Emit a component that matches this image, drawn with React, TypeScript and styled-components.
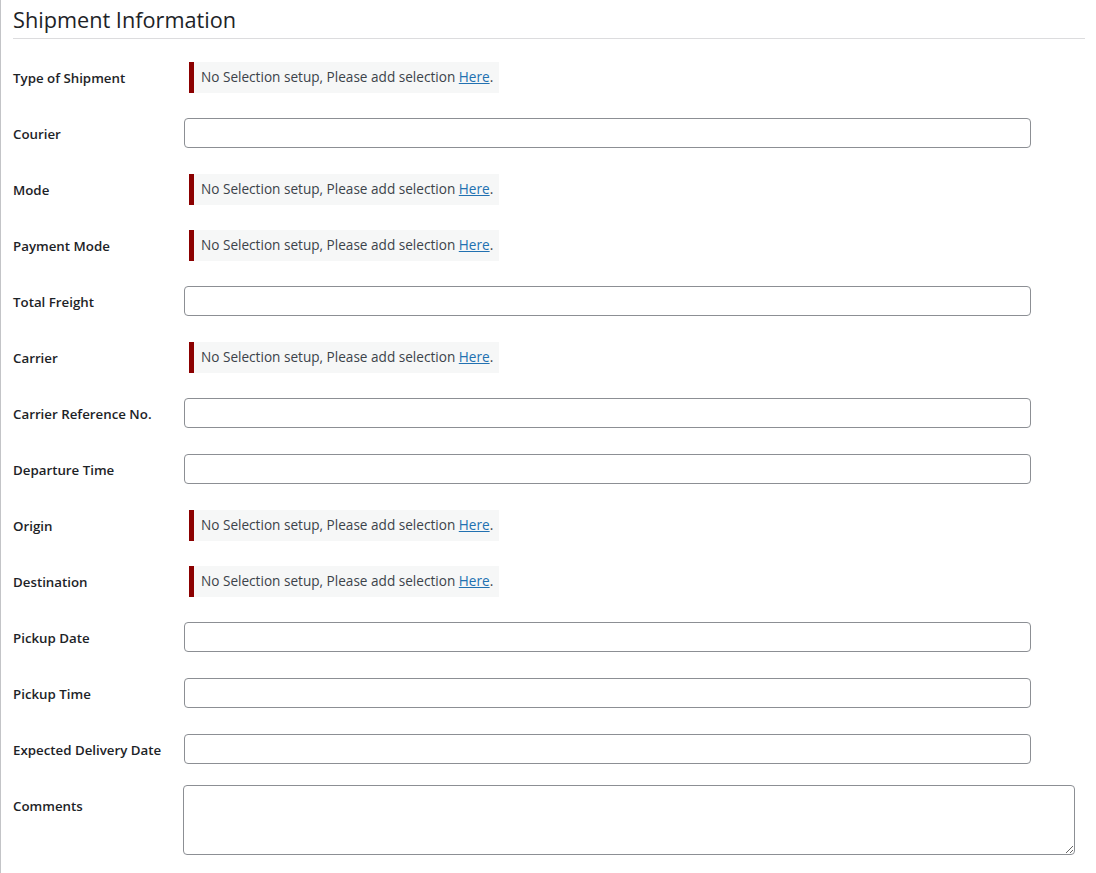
import styled, { createGlobalStyle } from 'styled-components';

const GlobalStyle = createGlobalStyle`
  html, body {
    margin: 0;
    padding: 0;
    background: #fff;
  }
  body {
    font-family: 'Open Sans', 'Noto Sans', sans-serif;
    font-size: 13px;
    color: #1d2327;
  }
`;

const Page = styled.div`
  min-height: 873px;
  box-sizing: border-box;
  border-left: 1px solid #c3c4c7;
  padding: 0 11px 0 12px;
`;

const Heading = styled.h2`
  margin: 0;
  padding: 8px 0 6px;
  font-size: 21.7px;
  font-weight: 400;
  line-height: 24px;
  color: #1d2327;
  border-bottom: 1px solid #dcdcde;
`;

const Form = styled.div`
  display: flex;
  flex-direction: column;
  padding-top: 10px;
`;

const Row = styled.div<{ $top?: boolean }>`
  display: grid;
  grid-template-columns: 170px 1fr;
  align-items: ${({ $top }) => ($top ? 'start' : 'center')};
  min-height: 56px;
  padding: ${({ $top }) => ($top ? '8px 0 0' : '0')};
`;

const Label = styled.label<{ $top?: boolean }>`
  font-size: 13.3px;
  font-weight: 600;
  color: #1d2327;
  padding-top: ${({ $top }) => ($top ? '12px' : '2px')};
`;

const TextInput = styled.input`
  box-sizing: border-box;
  width: 847px;
  height: 30px;
  margin-left: 1px;
  border: 1px solid #8c8f94;
  border-radius: 4px;
  background: #fff;
  font: inherit;
`;

const TextArea = styled.textarea`
  box-sizing: border-box;
  width: 892px;
  height: 70px;
  border: 1px solid #8c8f94;
  border-radius: 4px;
  background: #fff;
  font: inherit;
`;

const Notice = styled.div`
  justify-self: start;
  margin-left: 6px;
  display: flex;
  align-items: center;
  height: 31px;
  box-sizing: border-box;
  padding: 0 6px 2px 7px;
  border-left: 5px solid #8b0000;
  background: #f6f7f7;
  color: #3c434a;
  font-size: 13.6px;
  font-weight: 500;

  a {
    color: #2271b1;
    text-decoration: underline;
  }
`;

type Field = { label: string; kind: 'select' | 'input' };

const fields: Field[] = [
  { label: 'Type of Shipment', kind: 'select' },
  { label: 'Courier', kind: 'input' },
  { label: 'Mode', kind: 'select' },
  { label: 'Payment Mode', kind: 'select' },
  { label: 'Total Freight', kind: 'input' },
  { label: 'Carrier', kind: 'select' },
  { label: 'Carrier Reference No.', kind: 'input' },
  { label: 'Departure Time', kind: 'input' },
  { label: 'Origin', kind: 'select' },
  { label: 'Destination', kind: 'select' },
  { label: 'Pickup Date', kind: 'input' },
  { label: 'Pickup Time', kind: 'input' },
  { label: 'Expected Delivery Date', kind: 'input' },
];

export default function App() {
  return (
    <>
      <GlobalStyle />
      <Page>
        <Heading>Shipment Information</Heading>
        <Form>
          {fields.map((f) => (
            <Row key={f.label}>
              <Label>{f.label}</Label>
              {f.kind === 'input' ? (
                <TextInput type="text" />
              ) : (
                <Notice>
                  <span>
                    No Selection setup, Please add selection <a href="#">Here</a>.
                  </span>
                </Notice>
              )}
            </Row>
          ))}
          <Row $top>
            <Label $top>Comments</Label>
            <TextArea />
          </Row>
        </Form>
      </Page>
    </>
  );
}
